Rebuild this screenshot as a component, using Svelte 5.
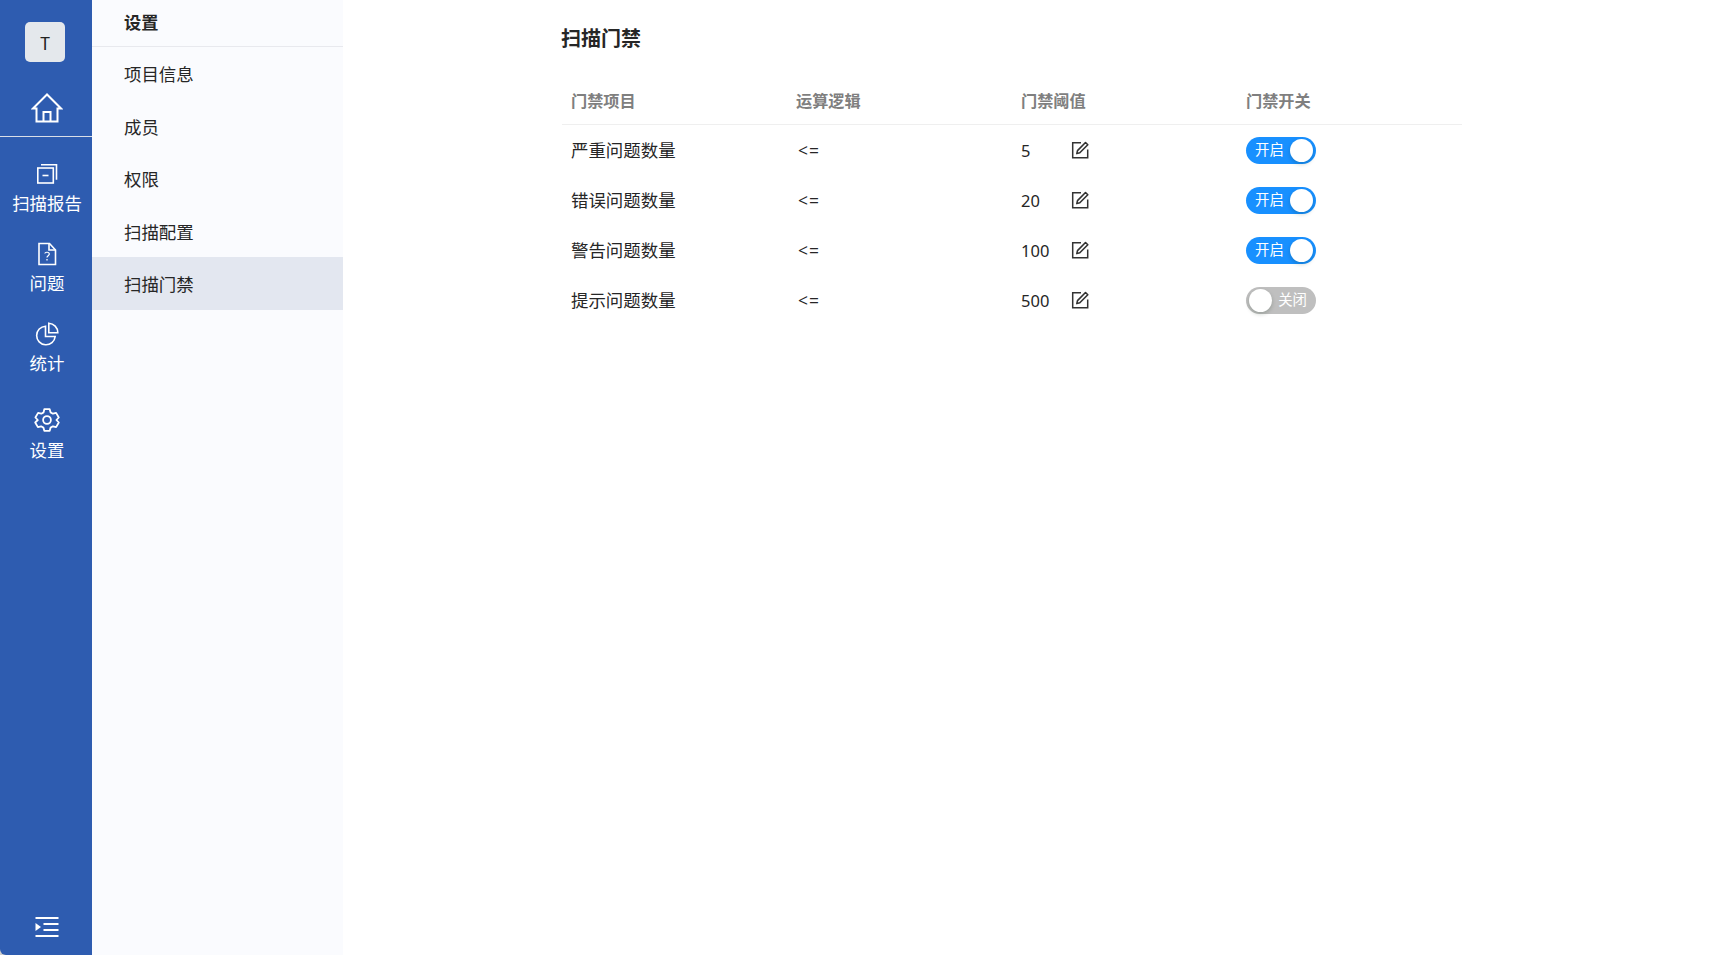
<script>
  const subItems = ['项目信息', '成员', '权限', '扫描配置', '扫描门禁'];
  const heads = ['门禁项目', '运算逻辑', '门禁阈值', '门禁开关'];
  const rows = [
    { name: '严重问题数量', value: '5', on: true },
    { name: '错误问题数量', value: '20', on: true },
    { name: '警告问题数量', value: '100', on: true },
    { name: '提示问题数量', value: '500', on: false }
  ];
</script>

<div class="page">
  <aside class="rail">
    <div class="avatar">T</div>
    <div class="home">
      <svg width="32" height="32" viewBox="0 0 32 32" fill="none" stroke="#fff" stroke-width="2">
        <path d="M2 16.500 16 2.500l14 14h-3.500V29.500h-21V16.500z" stroke-linejoin="miter" />
        <path d="M12.500 29.500V20h7v9.500" />
      </svg>
    </div>
    <nav class="railnav">
      <div class="railitem report">
        <svg width="22" height="22" viewBox="0 0 22 22" fill="none" stroke="#fff" stroke-width="1.600">
          <rect x="1.800" y="5" width="15.500" height="15" />
          <path d="M5 1.800h15.500v15" />
          <path d="M6.500 12.500h6" />
        </svg>
        <span>扫描报告</span>
      </div>
      <div class="railitem issue">
        <svg width="20" height="24" viewBox="0 0 20 24" fill="none" stroke="#fff" stroke-width="1.600">
          <path d="M2 1.500h10.500L18.500 8v14.500H2z" />
          <path d="M12 1.500V8h6.500" />
          <path d="M7.800 11.500c.3-1.700 4.500-1.800 4.500.6 0 1.600-2.300 1.700-2.300 3.400" stroke-width="1.200" />
          <path d="M10 17v1.500" stroke-width="1.300" />
        </svg>
        <span>问题</span>
      </div>
      <div class="railitem stats">
        <svg width="24" height="24" viewBox="0 0 24 24" fill="none" stroke="#fff" stroke-width="1.600">
          <path d="M10.500 4.200a9.300 9.300 0 1 0 9.700 10.300H10.500z" />
          <path d="M13.800 1.200a9.500 9.500 0 0 1 9 9.500h-9z" />
        </svg>
        <span>统计</span>
      </div>
      <div class="railitem settings">
        <svg width="26" height="26" viewBox="0 0 26 26" fill="none" stroke="#fff" stroke-width="1.800" stroke-linejoin="round">
          <path d="M10.300 2.200h5.400l.9 3.200 2.300 1.300 3.200-.8 2.700 4.600-2.400 2.500 2.400 2.500-2.700 4.600-3.200-.8-2.300 1.300-.9 3.200h-5.400l-.9-3.200-2.300-1.300-3.200.8-2.700-4.600L3.800 13 1.400 10.500l2.700-4.600 3.200.8 2.300-1.300z" />
          <circle cx="13" cy="13" r="3.900" />
        </svg>
        <span>设置</span>
      </div>
    </nav>
    <div class="collapse">
      <svg width="24" height="20" viewBox="0 0 24 20" fill="#fff">
        <rect x="0.500" y="0" width="23" height="2" />
        <rect x="8.500" y="6" width="15" height="2" />
        <rect x="8.500" y="12" width="15" height="2" />
        <rect x="0.500" y="18" width="23" height="2" />
        <path d="M0.500 6 6 10l-5.500 4z" />
      </svg>
    </div>
  </aside>

  <aside class="subnav">
    <div class="subhead">设置</div>
    {#each subItems as item, i}
      <div class="subitem" class:active={i === 4}>{item}</div>
    {/each}
  </aside>

  <main class="content">
    <h1>扫描门禁</h1>
    <div class="table">
      <div class="row head">
        {#each heads as h}<div class="cell">{h}</div>{/each}
      </div>
      {#each rows as r}
        <div class="row">
          <div class="cell name">{r.name}</div>
          <div class="cell op">&lt;=</div>
          <div class="cell threshold">
            <span class="num">{r.value}</span>
            <svg width="18" height="18" viewBox="0 0 18 18" fill="none" stroke="#333" stroke-width="1.500">
              <path d="M10 1.700H1.700v15h15V8.500" />
              <path d="M14.500 1.500 16.800 3.800 8.800 11.800l-3 .8.700-3z" stroke-width="1.600" stroke-linejoin="round" />
            </svg>
          </div>
          <div class="cell">
            <div class="switch" class:off={!r.on}>
              <span class="label">{r.on ? '开启' : '关闭'}</span>
              <span class="knob"></span>
            </div>
          </div>
        </div>
      {/each}
    </div>
  </main>
</div>

<style>
  :global(body) {
    margin: 0;
    background: #fff;
  }
  .page {
    display: flex;
    height: 955px;
    overflow: hidden;
    font-family: "Noto Sans CJK SC", "Noto Sans", sans-serif;
    color: #262626;
    font-size: 17.450px;
    background: linear-gradient(#cfcfcf, #cfcfcf) 0 100% / 10px 10px no-repeat, #fff;
  }
  .rail {
    width: 92px;
    flex: none;
    background: #2e5cb0;
    border-bottom-left-radius: 6px;
    display: flex;
    flex-direction: column;
    align-items: center;
    color: #fff;
  }
  .avatar {
    width: 40px;
    height: 40px;
    margin: 22px 2px 0 0;
    border-radius: 5px;
    background: #e4e8ec;
    color: #222;
    display: flex;
    align-items: center;
    justify-content: center;
    font-size: 17px;
    line-height: 1;
  }
  .home {
    align-self: stretch;
    height: 75px;
    box-sizing: border-box;
    border-bottom: 1px solid #d9dee8;
    display: flex;
    justify-content: center;
    padding: 30px 0 0 2px;
  }
  .railnav {
    display: flex;
    flex-direction: column;
    align-items: center;
    padding-left: 2px;
  }
  .railitem {
    display: flex;
    flex-direction: column;
    align-items: center;
    font-size: 17.450px;
    line-height: 24px;
    white-space: nowrap;
  }
  .railitem span {
    margin-top: 6px;
  }
  .report { margin-top: 26px; }
  .issue { margin-top: 27px; }
  .issue span { margin-top: 5px; }
  .stats { margin-top: 27px; }
  .stats span { margin-top: 5px; }
  .settings { margin-top: 32px; }
  .settings span { margin-top: 5px; }
  .collapse {
    margin-top: auto;
    margin-bottom: 18px;
    padding-left: 2px;
    height: 20px;
  }
  .collapse svg { display: block; }
  .subnav {
    width: 251px;
    flex: none;
    background: #fafbfe;
  }
  .subhead {
    height: 47px;
    line-height: 43px;
    box-sizing: border-box;
    border-bottom: 1px solid #e8e9ee;
    padding-left: 32px;
    font-weight: 700;
    font-size: 17.200px;
    margin-bottom: 0.400px;
  }
  .subitem {
    height: 52.500px;
    line-height: 53.100px;
    padding-left: 32px;
  }
  .subitem.active {
    background: #e3e7f0;
  }
  .content {
    width: 900px;
    margin-left: 219px;
  }
  h1 {
    margin: 0 0 0 -1px;
    height: 76px;
    line-height: 76px;
    font-size: 20px;
    font-weight: 700;
    color: #262626;
  }
  .row {
    display: grid;
    grid-template-columns: repeat(4, 225px);
    height: 50px;
    align-items: center;
  }
  .row.head {
    height: 49px;
    box-sizing: border-box;
    border-bottom: 1px solid #efefef;
    font-size: 16.200px;
    font-weight: 700;
    color: #7f7f7f;
  }
  .cell {
    padding-left: 9px;
  }
  .name {
    padding-bottom: 2px;
  }
  .op {
    font-family: "Open Sans", sans-serif;
    font-size: 17.450px;
    padding-left: 11px;
    letter-spacing: 1px;
  }
  .threshold {
    display: flex;
    align-items: center;
  }
  .num {
    width: 50px;
    font-family: "Noto Sans", sans-serif;
    font-size: 16.500px;
  }
  .threshold svg { display: block; }
  .switch {
    width: 70px;
    height: 27px;
    border-radius: 14px;
    background: #1890ff;
    color: #fff;
    display: flex;
    align-items: center;
    justify-content: space-between;
    padding: 0 3px 0 9px;
    box-sizing: border-box;
    font-size: 14.400px;
  }
  .label {
    line-height: 20px;
    padding-bottom: 3px;
  }
  .knob {
    width: 23px;
    height: 23px;
    border-radius: 50%;
    background: #fff;
    box-shadow: 0 2px 4px rgba(0, 35, 11, 0.2);
  }
  .switch.off {
    background: #bfbfbf;
    flex-direction: row-reverse;
    padding: 0 9px 0 3px;
  }
</style>
